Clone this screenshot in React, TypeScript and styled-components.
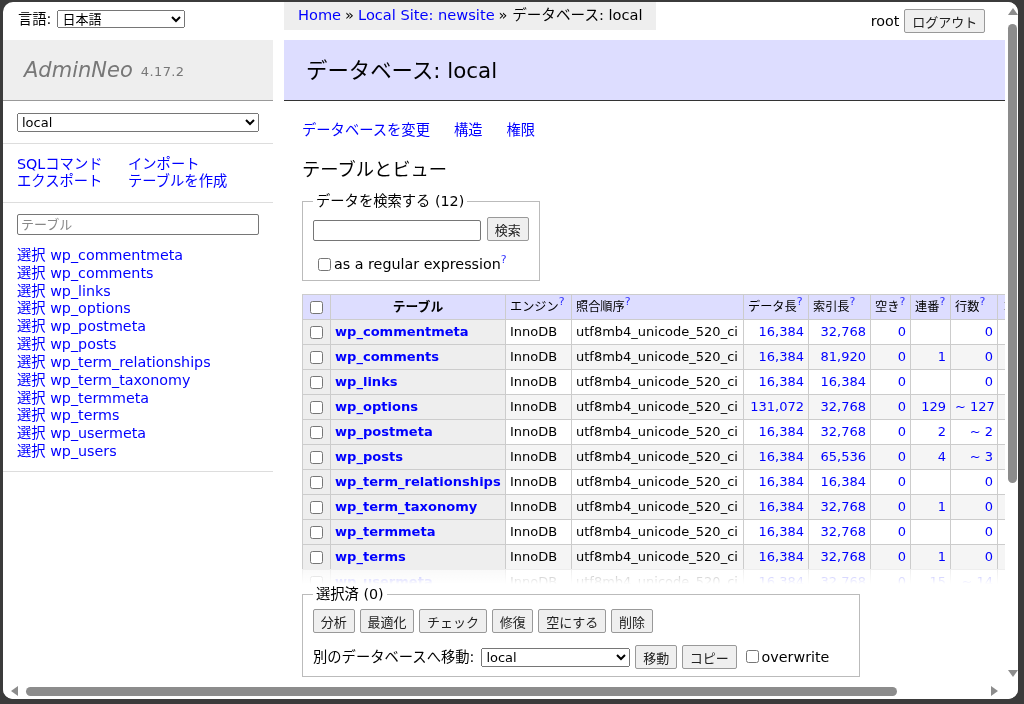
import * as React from 'react';
import styled, { createGlobalStyle } from 'styled-components';

const FONT = `"DejaVu Sans", "Noto Sans CJK JP", sans-serif`;

const Global = createGlobalStyle`
  html, body { margin: 0; height: 100%; background: #3b3b3b; overflow: hidden; }
  body { font: 14.3px/18px ${FONT}; color: #000; }
  a { color: #00f; text-decoration: none; }
  sup { font-size: 11px; line-height: 0; vertical-align: 6px; color: #33f; }
`;

const tables = [
  ['wp_commentmeta', '16,384', '32,768', '', '0'],
  ['wp_comments', '16,384', '81,920', '1', '0'],
  ['wp_links', '16,384', '16,384', '', '0'],
  ['wp_options', '131,072', '32,768', '129', '~ 127'],
  ['wp_postmeta', '16,384', '32,768', '2', '~ 2'],
  ['wp_posts', '16,384', '65,536', '4', '~ 3'],
  ['wp_term_relationships', '16,384', '16,384', '', '0'],
  ['wp_term_taxonomy', '16,384', '32,768', '1', '0'],
  ['wp_termmeta', '16,384', '32,768', '', '0'],
  ['wp_terms', '16,384', '32,768', '1', '0'],
  ['wp_usermeta', '16,384', '32,768', '15', '~ 14'],
  ['wp_users', '16,384', '16,384', '1', '0'],
];

const Window = styled.div`
  position: fixed;
  inset: 2px 6px 5px 3px;
  display: flex;
  flex-direction: column;
  background: #fff;
  border-radius: 10px;
  overflow: hidden;
`;

const Body = styled.div`
  flex: 1;
  min-height: 0;
  display: flex;
`;

const Page = styled.div`
  flex: 1;
  min-width: 0;
  display: flex;
`;

const Sidebar = styled.aside`
  width: 270px;
  flex: none;
`;

const LangRow = styled.div`
  height: 38px;
  box-sizing: border-box;
  padding: 0 0 4px 15px;
  display: flex;
  align-items: center;
  gap: 6px;
`;

const Select = styled.select<{ $w: number; $h?: number }>`
  width: ${(p) => p.$w}px;
  height: ${(p) => p.$h ?? 19}px;
  font: 13px ${FONT};
  padding: 0;
  box-sizing: border-box;
  flex: none;
`;

const Logo = styled.div`
  height: 61px;
  box-sizing: border-box;
  background: #eee;
  border-bottom: 1px solid #999;
  padding: 0 0 0 21px;
  display: flex;
  align-items: center;
  gap: 8px;
  color: #777;
`;

const LogoName = styled.span`
  font-size: 21px;
  font-style: italic;
`;

const LogoVersion = styled.span`
  font-size: 13px;
  margin-top: 3px;
  letter-spacing: 0.4px;
`;

const SideSection = styled.div<{ $h: number }>`
  height: ${(p) => p.$h}px;
  box-sizing: border-box;
  padding: 0 14px;
  border-bottom: 1px solid #ddd;
  display: flex;
  align-items: center;
`;

const SideLinks = styled.div`
  display: grid;
  grid-template-columns: 111px auto;
  line-height: 17px;
`;

const FilterSection = styled.div`
  padding: 11px 14px 0;
`;

const FilterInput = styled.input`
  display: block;
  width: 242px;
  height: 21px;
  box-sizing: border-box;
  font: 13px ${FONT};
  padding: 0 3px;
  border: 1px solid #767676;
  border-radius: 2px;
  &::placeholder { color: #888; }
`;

const TableList = styled.ul`
  list-style: none;
  margin: 0;
  padding: 11px 14px 11px;
  border-bottom: 1px solid #ddd;
  li { height: 17.82px; white-space: nowrap; }
`;

const Main = styled.main`
  flex: 1;
  min-width: 0;
  margin-left: 11px;
  display: flex;
  flex-direction: column;
`;

const TopBar = styled.div`
  height: 38px;
  flex: none;
  display: flex;
  justify-content: space-between;
  align-items: flex-start;
`;

const Crumbs = styled.div`
  height: 28px;
  box-sizing: border-box;
  background: #eee;
  padding: 0 13px 3px 14px;
  display: flex;
  align-items: center;
  gap: 4px;
  font-size: 14.6px;
  white-space: nowrap;
`;

const Logout = styled.div`
  margin: 7px 20px 0 0;
  display: flex;
  align-items: center;
  gap: 5px;
`;

const Button = styled.button`
  height: 24px;
  padding: 0 6.8px;
  font: 13px ${FONT};
  color: #222;
  background: #efefef;
  border: 1px solid #999;
  border-radius: 2px;
  white-space: nowrap;
  flex: none;
`;

const Heading = styled.h2`
  margin: 0;
  height: 61px;
  flex: none;
  box-sizing: border-box;
  background: #ddf;
  border-bottom: 1px solid #333;
  padding: 2px 0 0 22px;
  display: flex;
  align-items: center;
  font-size: 21.4px;
  font-weight: 400;
`;

const Content = styled.div`
  flex: 1;
  min-height: 0;
  padding: 0 0 0 18px;
  overflow: hidden;
`;

const Tabs = styled.div`
  display: flex;
  gap: 24px;
  margin-top: 20px;
`;

const Sub = styled.h3`
  font-size: 18.3px;
  font-weight: 400;
  margin: 21px 0 0;
  line-height: 20px;
`;

const Fieldset = styled.fieldset`
  margin: 0;
  border: 1px solid #bbb;
  padding: 7px 10px 8px;
  box-sizing: border-box;
  legend { padding: 0 3px; line-height: 16px; }
`;

const SearchBox = styled(Fieldset)`
  width: 237px;
  margin-top: 13px;
  height: 88px;
`;

const SearchRow = styled.div`
  display: flex;
  gap: 6px;
  align-items: flex-end;
  margin-top: 1px;
`;

const SearchInput = styled.input`
  width: 168px;
  height: 21px;
  box-sizing: border-box;
  border: 1px solid #767676;
  border-radius: 2px;
`;

const CheckLabel = styled.label`
  display: flex;
  align-items: center;
  gap: 3px;
  white-space: nowrap;
  padding-left: 5px;
  margin-top: 14px;
`;

const Check = styled.input.attrs({ type: 'checkbox' })`
  margin: 0;
  width: 13px;
  height: 13px;
  flex: none;
`;

const CenterCheck = styled(Check)`
  display: block;
  margin: 0 auto;
`;

const TableWrap = styled.div`
  margin-top: 13px;
  height: 290px;
  overflow: hidden;
  position: relative;
`;

const Fade = styled.div`
  position: absolute;
  left: 0;
  right: 0;
  bottom: 0;
  height: 15px;
  background: linear-gradient(rgba(255, 255, 255, 0.65), #fff);
`;

const Table = styled.table`
  border-collapse: collapse;
  table-layout: fixed;
  width: 735px;
  font-size: 13px;
  td, th {
    border: 1px solid #ccc;
    padding: 0 4px;
    height: 25px;
    box-sizing: border-box;
    white-space: nowrap;
    overflow: hidden;
  }
`;

const Col = styled.col<{ $w: number }>`
  width: ${(p) => p.$w}px;
`;

const HeadCell = styled.td<{ $strong?: boolean; $center?: boolean }>`
  background: #ddf;
  font-weight: ${(p) => (p.$strong ? 700 : 400)};
  text-align: ${(p) => (p.$center ? 'center' : 'left')};
  font-size: ${(p) => (p.$strong ? 12.8 : 12.2)}px;
`;

const GhostHead = styled(HeadCell)`
  color: #aaa;
`;

const Row = styled.tr<{ $even: boolean }>`
  background: ${(p) => (p.$even ? '#f5f5f5' : '#fff')};
`;

const NameCell = styled.th`
  background: #eee;
  text-align: left;
  font-size: 13.05px;
  a { font-weight: 700; }
`;

const CheckCell = styled(NameCell)`
  text-align: center;
`;

const Num = styled.td`
  text-align: right;
  color: #00f;
`;

const Actions = styled(Fieldset)`
  width: 558px;
  height: 91px;
  margin-top: 2px;
`;

const ActionRow = styled.div`
  display: flex;
  gap: 5px;
`;

const MoveRow = styled.div`
  display: flex;
  align-items: center;
  gap: 5px;
  margin-top: 12px;
  white-space: nowrap;
`;

const MoveLabel = styled.span`
  margin-right: 2px;
`;

const OverwriteCheck = styled(Check)`
  margin: -2px 0 0 4px;
`;

const OverwriteText = styled.span`
  margin-left: -2px;
`;

const VBar = styled.div`
  width: 13px;
  flex: none;
  box-sizing: border-box;
  padding: 4px 0 4px 2px;
  background: #fff;
  display: flex;
  flex-direction: column;
  align-items: center;
`;

const VThumb = styled.div`
  width: 9px;
  height: 459px;
  margin-top: 6px;
  background: #8c8c8c;
  border-radius: 5px;
`;

const Spacer = styled.div`
  flex: 1;
`;

const HBar = styled.div`
  height: 16px;
  flex: none;
  display: flex;
  align-items: center;
  padding: 0 18px 0 6px;
  background: #fff;
`;

const HThumb = styled.div`
  width: 871px;
  height: 9px;
  margin-left: 5px;
  background: #8c8c8c;
  border-radius: 5px;
`;

const ArrowIcon = styled.svg`
  flex: none;
`;

function Arrow({ dir }: { dir: 'up' | 'down' | 'left' | 'right' }) {
  const pts = {
    up: '1,9 11,9 6,2',
    down: '1,3 11,3 6,10',
    left: '9,1 9,11 2,6',
    right: '3,1 3,11 10,6',
  }[dir];
  return (
    <ArrowIcon width="12" height="12" viewBox="0 0 12 12">
      <polygon points={pts} fill="#8c8c8c" />
    </ArrowIcon>
  );
}

const widths = [28, 175, 66, 172, 65, 62, 40, 40, 47, 40];

export default function App() {
  return (
    <>
      <Global />
      <Window>
        <Body>
          <Page>
            <Sidebar>
              <LangRow>
                言語:
                <Select $w={128} $h={18}>
                  <option>日本語</option>
                </Select>
              </LangRow>
              <Logo>
                <LogoName>AdminNeo</LogoName>
                <LogoVersion>4.17.2</LogoVersion>
              </Logo>
              <SideSection $h={43}>
                <Select $w={242}>
                  <option>local</option>
                </Select>
              </SideSection>
              <SideSection $h={59}>
                <SideLinks>
                  <a href="#">SQLコマンド</a>
                  <a href="#">インポート</a>
                  <a href="#">エクスポート</a>
                  <a href="#">テーブルを作成</a>
                </SideLinks>
              </SideSection>
              <FilterSection>
                <FilterInput placeholder="テーブル" />
              </FilterSection>
              <TableList>
                {tables.map(([name]) => (
                  <li key={name}>
                    <a href="#">選択</a> <a href="#">{name}</a>
                  </li>
                ))}
              </TableList>
            </Sidebar>
            <Main>
              <TopBar>
                <Crumbs>
                  <a href="#">Home</a> » <a href="#">Local Site: newsite</a> » データベース: local
                </Crumbs>
                <Logout>
                  root
                  <Button>ログアウト</Button>
                </Logout>
              </TopBar>
              <Heading>データベース: local</Heading>
              <Content>
                <Tabs>
                  <a href="#">データベースを変更</a>
                  <a href="#">構造</a>
                  <a href="#">権限</a>
                </Tabs>
                <Sub>テーブルとビュー</Sub>
                <SearchBox>
                  <legend>データを検索する (12)</legend>
                  <SearchRow>
                    <SearchInput />
                    <Button>検索</Button>
                  </SearchRow>
                  <CheckLabel>
                    <Check />
                    <span>as a regular expression<sup>?</sup></span>
                  </CheckLabel>
                </SearchBox>
                <TableWrap>
                  <Table>
                    <colgroup>
                      {widths.map((w, i) => (
                        <Col key={i} $w={w} />
                      ))}
                    </colgroup>
                    <thead>
                      <tr>
                        <HeadCell $center><CenterCheck /></HeadCell>
                        <HeadCell $center $strong>テーブル</HeadCell>
                        <HeadCell>エンジン<sup>?</sup></HeadCell>
                        <HeadCell>照合順序<sup>?</sup></HeadCell>
                        <HeadCell>データ長<sup>?</sup></HeadCell>
                        <HeadCell>索引長<sup>?</sup></HeadCell>
                        <HeadCell>空き<sup>?</sup></HeadCell>
                        <HeadCell>連番<sup>?</sup></HeadCell>
                        <HeadCell>行数<sup>?</sup></HeadCell>
                        <GhostHead>コ</GhostHead>
                      </tr>
                    </thead>
                    <tbody>
                      {tables.map(([name, data, index, auto, rows], i) => (
                        <Row key={name} $even={i % 2 === 1}>
                          <CheckCell><CenterCheck /></CheckCell>
                          <NameCell><a href="#">{name}</a></NameCell>
                          <td>InnoDB</td>
                          <td>utf8mb4_unicode_520_ci</td>
                          <Num>{data}</Num>
                          <Num>{index}</Num>
                          <Num>0</Num>
                          <Num>{auto}</Num>
                          <Num>{rows}</Num>
                          <td />
                        </Row>
                      ))}
                    </tbody>
                  </Table>
                  <Fade />
                </TableWrap>
                <Actions>
                  <legend>選択済 (0)</legend>
                  <ActionRow>
                    <Button>分析</Button>
                    <Button>最適化</Button>
                    <Button>チェック</Button>
                    <Button>修復</Button>
                    <Button>空にする</Button>
                    <Button>削除</Button>
                  </ActionRow>
                  <MoveRow>
                    <MoveLabel>別のデータベースへ移動:</MoveLabel>
                    <Select $w={149}>
                      <option>local</option>
                    </Select>
                    <Button>移動</Button>
                    <Button>コピー</Button>
                    <OverwriteCheck />
                    <OverwriteText>overwrite</OverwriteText>
                  </MoveRow>
                </Actions>
              </Content>
            </Main>
          </Page>
          <VBar>
            <Arrow dir="up" />
            <VThumb />
            <Spacer />
            <Arrow dir="down" />
          </VBar>
        </Body>
        <HBar>
          <Arrow dir="left" />
          <HThumb />
          <Spacer />
          <Arrow dir="right" />
        </HBar>
      </Window>
    </>
  );
}
